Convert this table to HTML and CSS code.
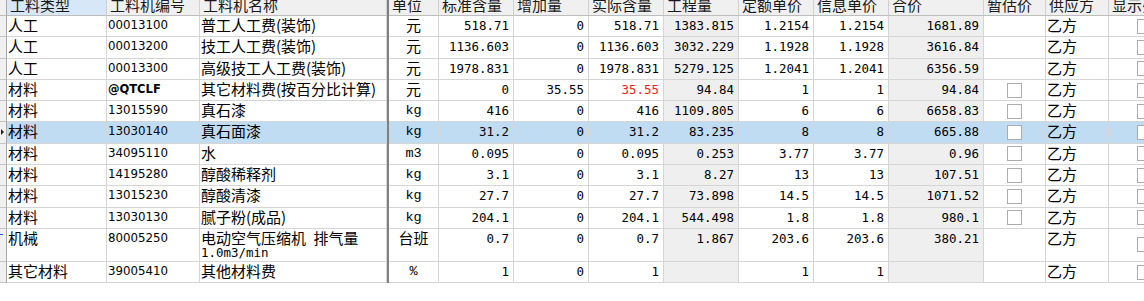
FILE: index.html
```html
<!DOCTYPE html>
<html lang="zh-CN">
<head>
<meta charset="utf-8">
<title>工料机</title>
<link rel="stylesheet" href="styles.css">
</head>
<body>
<div class="grid">
  <div class="row hdr">
    <div class="c ind"></div>
    <div class="c cur"><span>工料类型</span></div>
    <div class="c"><span>工料机编号</span></div>
    <div class="c"><span>工料机名称</span></div>
    <div class="sep"></div>
    <div class="c"><span>单位</span></div>
    <div class="c"><span>标准含量</span></div>
    <div class="c"><span>增加量</span></div>
    <div class="c"><span>实际含量</span></div>
    <div class="c"><span>工程量</span></div>
    <div class="c"><span>定额单价</span></div>
    <div class="c"><span>信息单价</span></div>
    <div class="c"><span>合价</span></div>
    <div class="c"><span>暂估价</span></div>
    <div class="c"><span>供应方</span></div>
    <div class="c"><span>显示列</span></div>
  </div>

  <div class="row">
    <div class="c ind"></div>
    <div class="c t">人工</div><div class="c id">00013100</div><div class="c t">普工人工费(装饰)</div><div class="sep"></div>
    <div class="c u">元</div><div class="c n">518.71</div><div class="c n">0</div><div class="c n">518.71</div><div class="c n g">1383.815</div><div class="c n">1.2154</div><div class="c n">1.2154</div><div class="c n g">1681.89</div>
    <div class="c"></div><div class="c t">乙方</div><div class="c ck"><i class="cb"></i></div>
  </div>
  <div class="row">
    <div class="c ind"></div>
    <div class="c t">人工</div><div class="c id">00013200</div><div class="c t">技工人工费(装饰)</div><div class="sep"></div>
    <div class="c u">元</div><div class="c n">1136.603</div><div class="c n">0</div><div class="c n">1136.603</div><div class="c n g">3032.229</div><div class="c n">1.1928</div><div class="c n">1.1928</div><div class="c n g">3616.84</div>
    <div class="c"></div><div class="c t">乙方</div><div class="c ck"><i class="cb"></i></div>
  </div>
  <div class="row">
    <div class="c ind"></div>
    <div class="c t">人工</div><div class="c id">00013300</div><div class="c t">高级技工人工费(装饰)</div><div class="sep"></div>
    <div class="c u">元</div><div class="c n">1978.831</div><div class="c n">0</div><div class="c n">1978.831</div><div class="c n g">5279.125</div><div class="c n">1.2041</div><div class="c n">1.2041</div><div class="c n g">6356.59</div>
    <div class="c"></div><div class="c t">乙方</div><div class="c ck"><i class="cb"></i></div>
  </div>
  <div class="row">
    <div class="c ind"></div>
    <div class="c t">材料</div><div class="c id b">@QTCLF</div><div class="c t">其它材料费(按百分比计算)</div><div class="sep"></div>
    <div class="c u">元</div><div class="c n">0</div><div class="c n">35.55</div><div class="c n red">35.55</div><div class="c n g">94.84</div><div class="c n">1</div><div class="c n">1</div><div class="c n g">94.84</div>
    <div class="c ck"><i class="cb"></i></div><div class="c t">乙方</div><div class="c ck"><i class="cb"></i></div>
  </div>
  <div class="row">
    <div class="c ind"></div>
    <div class="c t">材料</div><div class="c id">13015590</div><div class="c t">真石漆</div><div class="sep"></div>
    <div class="c u m">kg</div><div class="c n">416</div><div class="c n">0</div><div class="c n">416</div><div class="c n g">1109.805</div><div class="c n">6</div><div class="c n">6</div><div class="c n g">6658.83</div>
    <div class="c ck"><i class="cb"></i></div><div class="c t">乙方</div><div class="c ck"><i class="cb"></i></div>
  </div>
  <div class="row sel">
    <div class="c ind"><i class="arrow"></i></div>
    <div class="c t">材料</div><div class="c id">13030140</div><div class="c t">真石面漆</div><div class="sep"></div>
    <div class="c u m">kg</div><div class="c n">31.2</div><div class="c n">0</div><div class="c n">31.2</div><div class="c n g">83.235</div><div class="c n">8</div><div class="c n">8</div><div class="c n g">665.88</div>
    <div class="c ck"><i class="cb"></i></div><div class="c t">乙方</div><div class="c ck"><i class="cb"></i></div>
  </div>
  <div class="row">
    <div class="c ind"></div>
    <div class="c t">材料</div><div class="c id">34095110</div><div class="c t">水</div><div class="sep"></div>
    <div class="c u m">m3</div><div class="c n">0.095</div><div class="c n">0</div><div class="c n">0.095</div><div class="c n g">0.253</div><div class="c n">3.77</div><div class="c n">3.77</div><div class="c n g">0.96</div>
    <div class="c ck"><i class="cb"></i></div><div class="c t">乙方</div><div class="c ck"><i class="cb"></i></div>
  </div>
  <div class="row">
    <div class="c ind"></div>
    <div class="c t">材料</div><div class="c id">14195280</div><div class="c t">醇酸稀释剂</div><div class="sep"></div>
    <div class="c u m">kg</div><div class="c n">3.1</div><div class="c n">0</div><div class="c n">3.1</div><div class="c n g">8.27</div><div class="c n">13</div><div class="c n">13</div><div class="c n g">107.51</div>
    <div class="c ck"><i class="cb"></i></div><div class="c t">乙方</div><div class="c ck"><i class="cb"></i></div>
  </div>
  <div class="row">
    <div class="c ind"></div>
    <div class="c t">材料</div><div class="c id">13015230</div><div class="c t">醇酸清漆</div><div class="sep"></div>
    <div class="c u m">kg</div><div class="c n">27.7</div><div class="c n">0</div><div class="c n">27.7</div><div class="c n g">73.898</div><div class="c n">14.5</div><div class="c n">14.5</div><div class="c n g">1071.52</div>
    <div class="c ck"><i class="cb"></i></div><div class="c t">乙方</div><div class="c ck"><i class="cb"></i></div>
  </div>
  <div class="row">
    <div class="c ind"></div>
    <div class="c t">材料</div><div class="c id">13030130</div><div class="c t">腻子粉(成品)</div><div class="sep"></div>
    <div class="c u m">kg</div><div class="c n">204.1</div><div class="c n">0</div><div class="c n">204.1</div><div class="c n g">544.498</div><div class="c n">1.8</div><div class="c n">1.8</div><div class="c n g">980.1</div>
    <div class="c ck"><i class="cb"></i></div><div class="c t">乙方</div><div class="c ck"><i class="cb"></i></div>
  </div>
  <div class="row tall">
    <div class="c ind"><i class="dash"></i></div>
    <div class="c t">机械</div><div class="c id">80005250</div><div class="c t">电动空气压缩机&ensp;排气量<span class="l2">1.0m3/min</span></div><div class="sep"></div>
    <div class="c u">台班</div><div class="c n">0.7</div><div class="c n">0</div><div class="c n">0.7</div><div class="c n g">1.867</div><div class="c n">203.6</div><div class="c n">203.6</div><div class="c n g">380.21</div>
    <div class="c"></div><div class="c t">乙方</div><div class="c ck"><i class="cb"></i></div>
  </div>
  <div class="row">
    <div class="c ind"></div>
    <div class="c t">其它材料</div><div class="c id">39005410</div><div class="c t">其他材料费</div><div class="sep"></div>
    <div class="c u m">%</div><div class="c n">1</div><div class="c n">0</div><div class="c n">1</div><div class="c n g"></div><div class="c n">1</div><div class="c n">1</div><div class="c n g"></div>
    <div class="c"></div><div class="c t">乙方</div><div class="c ck"><i class="cb"></i></div>
  </div>
</div>
</body>
</html>
```

FILE: styles.css
```css
html, body {
  margin: 0;
  padding: 0;
  background: #ffffff;
  overflow: hidden;
}

body {
  font-family: "Noto Sans CJK SC", "Noto Sans CJK JP", sans-serif;
  font-size: 15px;
  color: #000000;
}

.grid {
  width: max-content;
}

.row {
  display: grid;
  grid-template-columns: 7px 100px 93px 187px 2px 50px 75px 75px 75px 75px 75px 75px 95px 62px 63px 72px;
  height: 21.3px;
}

.row.tall {
  height: 33px;
}

.c {
  box-sizing: border-box;
  border-right: 1px solid #d5d5d5;
  border-bottom: 1px solid #d5d5d5;
  white-space: nowrap;
  line-height: 18px;
}

.sep {
  background: #7f7f7f;
}

.ind {
  background: #f0f0f0;
  border-right-color: #a8a8a8;
  border-bottom-color: #c4c4c4;
  position: relative;
}

/* header */
.hdr {
  height: 16px;
}

.hdr .c {
  background: #f0f0f0;
  border-bottom-color: #bdbdbd;
  border-right-color: #d0d0d0;
  padding-left: 3px;
  line-height: 15px;
  color: #1a1a1a;
  overflow: hidden;
}

.hdr .c span {
  display: block;
  margin-top: -3px;
}

.hdr .c.cur {
  background: #d7e7f7;
}

.hdr .ind {
  padding: 0;
  border-right-color: #a8a8a8;
}

/* cell types */
.t {
  padding-left: 1px;
}

.id {
  font-family: "DejaVu Sans", sans-serif;
  font-size: 11.8px;
  line-height: 16px;
  padding-top: 1px;
  padding-left: 1px;
}

.id.b {
  font-weight: bold;
  font-size: 11.5px;
}

.u {
  text-align: center;
}

.u.m {
  font-family: "Liberation Mono", monospace;
  font-size: 13.5px;
  line-height: 20px;
}

.n {
  text-align: right;
  padding-right: 4px;
  font-family: "DejaVu Sans Mono", monospace;
  font-size: 12.45px;
  line-height: 20px;
}

.g {
  background: #efefef;
}

.red {
  color: #ff1a1a;
}

.l2 {
  display: block;
  font-family: "DejaVu Sans Mono", monospace;
  font-size: 12.45px;
  line-height: 12px;
}

.sel .c:not(.ind) {
  background: #c0dcf3;
}

/* checkboxes */
.ck {
  display: flex;
  align-items: center;
  justify-content: center;
}

.cb {
  display: block;
  width: 15px;
  height: 15px;
  box-sizing: border-box;
  border: 1px solid #acacac;
  background: #ffffff;
}

/* row indicator marks */
.arrow {
  position: absolute;
  left: 1px;
  top: 7px;
  width: 0;
  height: 0;
  border-top: 3px solid transparent;
  border-bottom: 3px solid transparent;
  border-left: 3px solid #202020;
}

.dash {
  position: absolute;
  left: 0;
  top: 5px;
  width: 3px;
  height: 1px;
  background: #2a5bd7;
}
```
